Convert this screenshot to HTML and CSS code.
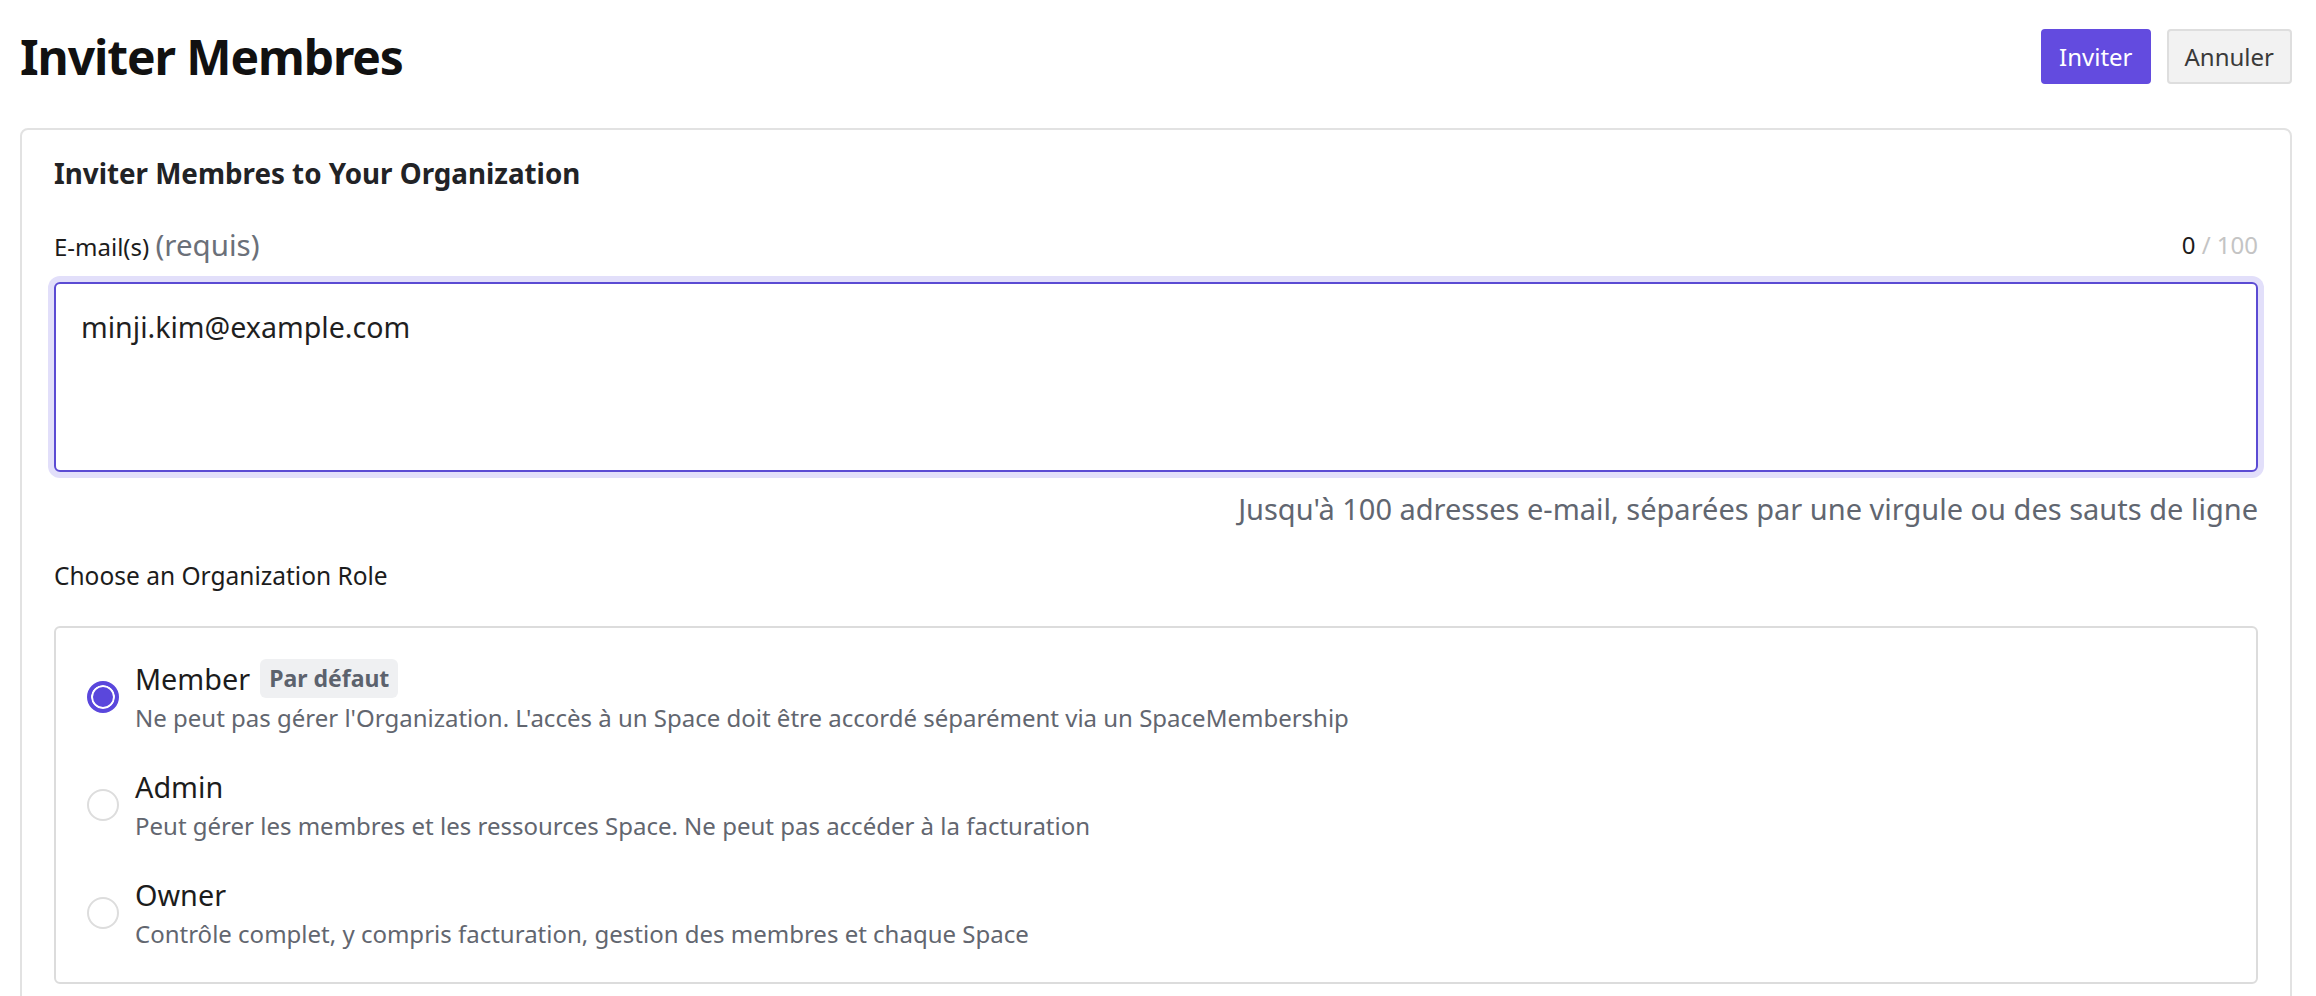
FILE: index.html
```html
<!DOCTYPE html>
<html lang="fr">
<head>
<meta charset="utf-8">
<title>Inviter Membres</title>
<link rel="stylesheet" href="styles.css">
</head>
<body>
<header class="page-header">
  <h1 class="page-title">Inviter Membres</h1>
  <div class="actions">
    <button class="btn btn-primary" type="button">Inviter</button>
    <button class="btn btn-secondary" type="button">Annuler</button>
  </div>
</header>

<section class="card">
  <h2 class="card-title">Inviter Membres to Your Organization</h2>

  <div class="field-head">
    <label class="field-label" for="emails">E-mail(s) <span class="req">(requis)</span></label>
    <div class="counter"><span class="count">0</span> <span class="max">/ 100</span></div>
  </div>
  <textarea id="emails" class="emails">minji.kim@example.com</textarea>
  <p class="helper">Jusqu'à 100 adresses e-mail, séparées par une virgule ou des sauts de ligne</p>

  <p class="section-label">Choose an Organization Role</p>

  <div class="roles">
    <div class="role">
      <span class="radio checked"></span>
      <div class="role-text">
        <div class="role-name">Member <span class="badge">Par défaut</span></div>
        <div class="role-desc">Ne peut pas gérer l'Organization. L'accès à un Space doit être accordé séparément via un SpaceMembership</div>
      </div>
    </div>
    <div class="role">
      <span class="radio"></span>
      <div class="role-text">
        <div class="role-name">Admin</div>
        <div class="role-desc">Peut gérer les membres et les ressources Space. Ne peut pas accéder à la facturation</div>
      </div>
    </div>
    <div class="role">
      <span class="radio"></span>
      <div class="role-text">
        <div class="role-name">Owner</div>
        <div class="role-desc">Contrôle complet, y compris facturation, gestion des membres et chaque Space</div>
      </div>
    </div>
  </div>
</section>
</body>
</html>
```

FILE: styles.css
```css
* { box-sizing: border-box; }

html, body {
  margin: 0;
  background: #ffffff;
}

body {
  padding: 28px 24px 0 20px;
  font-family: "Noto Sans", "Open Sans", sans-serif;
  color: #1c1c1c;
  font-size: 24px;
  line-height: 1.5;
}

.page-header {
  display: flex;
  align-items: center;
  justify-content: space-between;
}

.page-title {
  margin: 0;
  font-size: 48px;
  line-height: 1.2;
  font-weight: 700;
  letter-spacing: -1.1px;
  color: #111111;
}

.actions {
  display: flex;
  gap: 16px;
}

.btn {
  font-family: "Noto Sans", sans-serif;
  font-size: 24px;
  line-height: 36px;
  height: 55px;
  border-radius: 4px;
  padding: 0 16px;
  cursor: pointer;
}

.btn-primary {
  background: #634bdf;
  border: 2px solid #634bdf;
  color: #ffffff;
}

.btn-secondary {
  background: #f2f2f2;
  border: 2px solid #dedede;
  color: #3a3a3a;
}

.card {
  margin-top: 42px;
  border: 2px solid #e2e2e2;
  border-radius: 8px;
  padding: 24px 32px 40px;
  min-height: 900px;
}

.card-title {
  margin: 0 0 31px;
  font-size: 27.75px;
  line-height: 39px;
  font-weight: 700;
  color: #222326;
}

.field-head {
  display: flex;
  align-items: center;
  justify-content: space-between;
}

.field-label {
  font-size: 24px;
  line-height: 36px;
  color: #1c1c1c;
}

.req {
  font-size: 29.5px;
  line-height: 42px;
  color: #6b7079;
}

.counter {
  font-size: 24px;
  line-height: 36px;
}

.count { color: #1c1c1c; }
.max { color: #c4c4c4; }

.emails {
  display: block;
  width: 100%;
  height: 190px;
  margin-top: 16px;
  padding: 22px 25px 18px;
  border: 2px solid #5b4bd3;
  border-radius: 6px;
  box-shadow: 0 0 0 6px #e2dffa;
  font-family: "Noto Sans", sans-serif;
  font-size: 28.6px;
  line-height: 42px;
  color: #1f1f1f;
  resize: none;
  outline: none;
  background: #ffffff;
}

.helper {
  margin: 16px 0 0;
  text-align: right;
  font-size: 29px;
  line-height: 42px;
  color: #616670;
}

.section-label {
  margin: 28px 0 0;
  font-size: 24.5px;
  line-height: 36px;
  color: #1c1c1c;
}

.roles {
  margin-top: 32px;
  border: 2px solid #dcdcdc;
  border-radius: 6px;
  padding: 30px 30px 30px 31px;
  display: flex;
  flex-direction: column;
  gap: 30px;
}

.role {
  display: flex;
  align-items: center;
  gap: 16px;
}

.radio {
  flex: none;
  width: 32px;
  height: 32px;
  border-radius: 50%;
  border: 2px solid #dddddd;
  background: #ffffff;
}

.radio.checked {
  border: 4px solid #5a47dc;
  background: #5a47dc;
  box-shadow: inset 0 0 0 2px #ffffff;
}

.role-text {
  display: flex;
  flex-direction: column;
}

.role-name {
  display: flex;
  align-items: center;
  gap: 10px;
  font-size: 28.8px;
  line-height: 42px;
  color: #1c1c1c;
}

.badge {
  display: inline-block;
  font-size: 23px;
  line-height: 35px;
  padding: 2px 9px;
  font-weight: 700;
  color: #5c626d;
  background: #eff0f2;
  border-radius: 6px;
}

.role-desc {
  font-size: 24px;
  line-height: 36px;
  color: #62666f;
}
```
